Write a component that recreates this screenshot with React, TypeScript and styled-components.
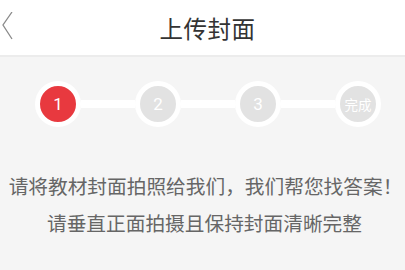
import React from "react";
import styled, { createGlobalStyle } from "styled-components";

const GlobalStyle = createGlobalStyle`
  html, body {
    margin: 0;
    padding: 0;
    background: #f5f5f5;
  }
  body {
    font-family: "Noto Sans CJK SC", "Noto Sans", sans-serif;
  }
`;

const Page = styled.div`
  width: 405px;
  height: 270px;
  background: #f5f5f5;
  overflow: hidden;
`;

const Header = styled.div`
  display: grid;
  grid-template-columns: 1fr auto 1fr;
  align-items: center;
  height: 55px;
  background: #ffffff;
  border-bottom: 2px solid #ececec;
`;

const BackButton = styled.div`
  display: flex;
  align-items: center;
  height: 55px;
  padding-left: 1px;
`;

const Title = styled.div`
  font-size: 23.5px;
  color: #333333;
  letter-spacing: 0.5px;
  line-height: 1;
  padding-top: 2px;
  margin-left: 10px;
`;

const Steps = styled.div`
  display: flex;
  align-items: center;
  padding: 24px 0 0 35px;
`;

const Step = styled.div<{ $active?: boolean; $small?: boolean }>`
  width: 36px;
  height: 36px;
  border-radius: 50%;
  border: 5px solid #ffffff;
  background: ${(p) => (p.$active ? "#e8393f" : "#e2e2e2")};
  color: #ffffff;
  display: flex;
  align-items: center;
  justify-content: center;
  font-family: "Roboto", "Noto Sans CJK SC", sans-serif;
  font-size: ${(p) => (p.$small ? "13.5px" : "17px")};
  flex-shrink: 0;
`;

const Connector = styled.div`
  width: 54px;
  height: 8px;
  background: #ffffff;
`;

const Tips = styled.div`
  margin-top: 40px;
  text-align: center;
  color: #666666;
  font-size: 19.7px;
  line-height: 37px;
  white-space: nowrap;
`;

const TipLine = styled.div<{ $shift?: number }>`
  margin-left: ${(p) => p.$shift ?? 0}px;
`;

export default function App() {
  return (
    <Page>
      <GlobalStyle />
      <Header>
        <BackButton>
          <svg width="14" height="32" viewBox="0 0 14 32">
            <polyline
              points="11,0 2,13 11,27"
              fill="none"
              stroke="#8a8a8a"
              strokeWidth="1.3"
            />
          </svg>
        </BackButton>
        <Title>上传封面</Title>
        <div />
      </Header>
      <Steps>
        <Step $active>1</Step>
        <Connector />
        <Step>2</Step>
        <Connector />
        <Step>3</Step>
        <Connector />
        <Step $small>完成</Step>
      </Steps>
      <Tips>
        <TipLine $shift={6}>请将教材封面拍照给我们，我们帮您找答案！</TipLine>
        <TipLine $shift={4}>请垂直正面拍摄且保持封面清晰完整</TipLine>
      </Tips>
    </Page>
  );
}
